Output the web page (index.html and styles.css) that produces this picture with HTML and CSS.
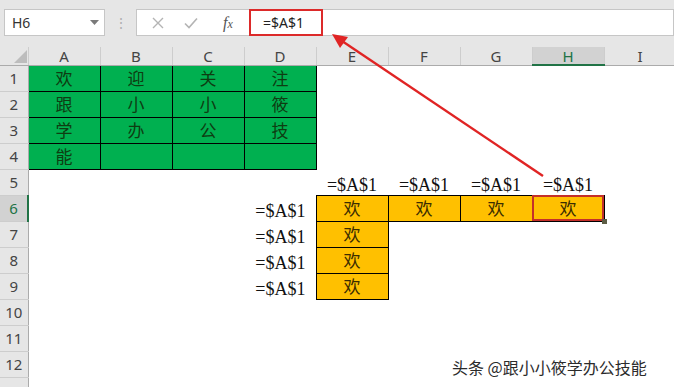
FILE: index.html
```html
<!DOCTYPE html>
<html lang="zh-CN">
<head>
    <meta charset="UTF-8">
    <title>绝对引用 - 工作表</title>
    <link rel="stylesheet" href="styles.css">
</head>
<body>
    <div class="app">
        <div class="toolbar">
            <div class="namebox">
                <span>H6</span>
                <svg class="caret" width="9" height="5" viewBox="0 0 9 5"><polygon points="0,0 9,0 4.5,5" fill="#7a7a7a"/></svg>
            </div>
            <div class="grip">⋮</div>
            <div class="formula">
                <span class="fbtn">
                    <svg width="12" height="12" viewBox="0 0 12 12"><path d="M1 1 L11 11 M11 1 L1 11" stroke="#b4b4b4" stroke-width="1.4" fill="none"/></svg>
                </span>
                <span class="fbtn">
                    <svg width="14" height="12" viewBox="0 0 14 12"><path d="M1 6.5 L5 10.5 L13 1.5" stroke="#b4b4b4" stroke-width="1.6" fill="none"/></svg>
                </span>
                <span class="fx">f<small>x</small></span>
                <div class="finput">=$A$1</div>
            </div>
        </div>

        <table class="sheet">
            <colgroup>
                <col class="c-rh">
                <col><col><col><col><col><col><col><col><col>
            </colgroup>
            <thead>
                <tr>
                    <th class="corner"><svg width="13" height="13" viewBox="0 0 13 13"><polygon points="13,0 13,13 0,13" fill="#bdbdbd"/></svg></th>
                    <th>A</th><th>B</th><th>C</th><th>D</th><th>E</th><th>F</th><th>G</th><th class="on">H</th><th>I</th>
                </tr>
            </thead>
            <tbody>
                <tr>
                    <th class="rh">1</th>
                    <td class="g">欢</td><td class="g">迎</td><td class="g">关</td><td class="g">注</td>
                    <td></td><td></td><td></td><td></td><td></td>
                </tr>
                <tr>
                    <th class="rh">2</th>
                    <td class="g">跟</td><td class="g">小</td><td class="g">小</td><td class="g">筱</td>
                    <td></td><td></td><td></td><td></td><td></td>
                </tr>
                <tr>
                    <th class="rh">3</th>
                    <td class="g">学</td><td class="g">办</td><td class="g">公</td><td class="g">技</td>
                    <td></td><td></td><td></td><td></td><td></td>
                </tr>
                <tr>
                    <th class="rh">4</th>
                    <td class="g">能</td><td class="g"></td><td class="g"></td><td class="g"></td>
                    <td></td><td></td><td></td><td></td><td></td>
                </tr>
                <tr>
                    <th class="rh">5</th>
                    <td></td><td></td><td></td><td></td>
                    <td class="lbl">=$A$1</td><td class="lbl">=$A$1</td><td class="lbl">=$A$1</td><td class="lbl">=$A$1</td>
                    <td></td>
                </tr>
                <tr>
                    <th class="rh on">6</th>
                    <td></td><td></td><td></td>
                    <td class="lbl right">=$A$1</td>
                    <td class="y">欢</td><td class="y">欢</td><td class="y">欢</td><td class="y sel">欢</td>
                    <td></td>
                </tr>
                <tr>
                    <th class="rh">7</th>
                    <td></td><td></td><td></td>
                    <td class="lbl right">=$A$1</td>
                    <td class="y">欢</td>
                    <td></td><td></td><td></td><td></td>
                </tr>
                <tr>
                    <th class="rh">8</th>
                    <td></td><td></td><td></td>
                    <td class="lbl right">=$A$1</td>
                    <td class="y">欢</td>
                    <td></td><td></td><td></td><td></td>
                </tr>
                <tr>
                    <th class="rh">9</th>
                    <td></td><td></td><td></td>
                    <td class="lbl right">=$A$1</td>
                    <td class="y">欢</td>
                    <td></td><td></td><td></td><td></td>
                </tr>
                <tr>
                    <th class="rh">10</th>
                    <td></td><td></td><td></td><td></td><td></td><td></td><td></td><td></td><td></td>
                </tr>
                <tr>
                    <th class="rh">11</th>
                    <td></td><td></td><td></td><td></td><td></td><td></td><td></td><td></td><td></td>
                </tr>
                <tr>
                    <th class="rh">12</th>
                    <td></td><td></td><td></td><td></td><td></td><td></td><td></td><td></td><td></td>
                </tr>
                <tr>
                    <th class="rh"></th>
                    <td></td><td></td><td></td><td></td><td></td><td></td><td></td><td></td><td></td>
                </tr>
            </tbody>
        </table>

        <!-- annotation arrow: H5 -> formula bar -->
        <svg class="arrow" width="674" height="387" viewBox="0 0 674 387">
            <line x1="543" y1="176" x2="342" y2="41" stroke="#e02424" stroke-width="2.4"/>
            <polygon points="332,34 348,37 340,48" fill="#e02424"/>
        </svg>

        <div class="watermark">头条 @跟小小筱学办公技能</div>
    </div>
</body>
</html>
```

FILE: styles.css
```css
* {
    margin: 0;
    padding: 0;
    box-sizing: border-box;
}

html, body {
    width: 674px;
    height: 387px;
    overflow: hidden;
    background: #fff;
}

body {
    font-family: "Noto Sans", "Liberation Sans", sans-serif;
    color: #222;
}

.app {
    position: relative;
    width: 674px;
    height: 387px;
    overflow: hidden;
}

/* ---------- toolbar ---------- */

.toolbar {
    height: 47px;
    background: #e6e6e6;
    display: flex;
    align-items: flex-start;
    padding: 9px 0 0 4px;
}

.namebox {
    width: 101px;
    height: 27px;
    background: #fff;
    border: 1px solid #c6c6c6;
    display: flex;
    align-items: center;
    justify-content: space-between;
    padding: 0 5px 0 7px;
    font-size: 14px;
    color: #333;
}

.grip {
    width: 31px;
    height: 27px;
    line-height: 27px;
    text-align: center;
    color: #b0b0b0;
    font-size: 14px;
}

.formula {
    flex: 1;
    height: 27px;
    background: #fff;
    border: 1px solid #c6c6c6;
    display: flex;
    align-items: center;
    padding-left: 4px;
}

.fbtn {
    width: 33px;
    display: flex;
    justify-content: center;
}

.fx {
    width: 42px;
    text-align: center;
    font-family: "Liberation Serif", serif;
    font-style: italic;
    font-size: 16px;
    color: #555;
}

.fx small {
    font-size: 12px;
}

.finput {
    width: 74px;
    height: 27px;
    margin-top: -1px;
    margin-bottom: -1px;
    border: 2px solid #dc2a2a;
    padding-left: 12px;
    line-height: 23px;
    font-size: 14px;
    color: #222;
}

/* ---------- sheet ---------- */

.sheet {
    border-collapse: collapse;
    table-layout: fixed;
    width: 676px;
}

.sheet col {
    width: 72px;
}

.sheet col.c-rh {
    width: 28px;
}

.sheet thead th {
    height: 18px;
    background: #e6e6e6;
    border-right: 1px solid #cdcdcd;
    border-bottom: 1px solid #ababab;
    font-weight: normal;
    font-size: 15px;
    line-height: 16px;
    color: #444;
    text-align: center;
}

.sheet thead th.corner {
    text-align: right;
    vertical-align: bottom;
    padding: 0 1px 2px 0;
    line-height: 0;
}

.sheet thead th.on {
    background: #d2d2d2;
    color: #217346;
    border-bottom: 2px solid #217346;
}

.sheet td,
.sheet th.rh {
    height: 26px;
}

.sheet th.rh {
    background: #e6e6e6;
    border-right: 1px solid #ababab;
    border-bottom: 1px solid #cdcdcd;
    font-weight: normal;
    font-size: 15px;
    color: #444;
    text-align: center;
}

.sheet th.rh.on {
    background: #d2d2d2;
    color: #217346;
    border-right: 2px solid #217346;
}

.sheet td {
    text-align: center;
    vertical-align: middle;
    font-family: "Noto Sans CJK SC", sans-serif;
    font-size: 17px;
    line-height: 20px;
}

.sheet td.g {
    background: #00b050;
    border: 1px solid #000;
    color: #0e3d12;
}

.sheet td.y {
    background: #ffc000;
    border: 1px solid #000;
    color: #3b2d00;
}

.sheet td.sel {
    position: relative;
    outline: 2px solid #c4302a;
    outline-offset: -2px;
}

.sheet td.sel::after {
    content: "";
    position: absolute;
    right: -3px;
    bottom: -3px;
    width: 5px;
    height: 5px;
    background: #5d5d45;
}

.sheet td.lbl {
    font-family: "Liberation Serif", serif;
    font-size: 18px;
    vertical-align: bottom;
    color: #111;
}

.sheet td.lbl.right {
    text-align: right;
    padding-right: 10px;
}

/* ---------- overlays ---------- */

.arrow {
    position: absolute;
    left: 0;
    top: 0;
    pointer-events: none;
}

.watermark {
    position: absolute;
    left: 452px;
    top: 355px;
    font-family: "Noto Sans CJK SC", sans-serif;
    font-size: 16px;
    color: #2b2b2b;
    white-space: nowrap;
    text-shadow: 0 0 2px #fff, 0 0 2px #fff;
}
```
